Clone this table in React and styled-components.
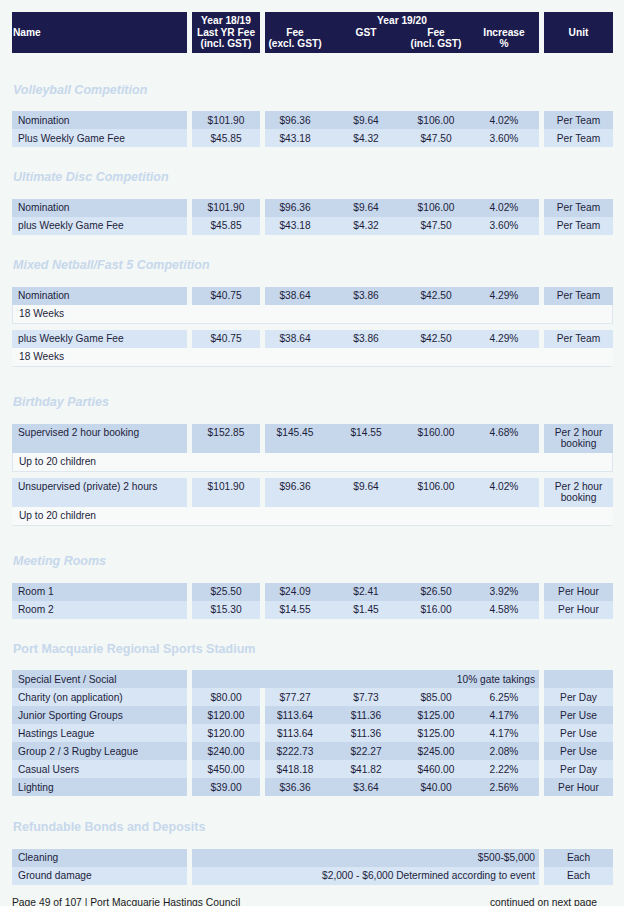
import React from "react"
import styled, { createGlobalStyle } from "styled-components"

const GlobalStyle = createGlobalStyle`
  html, body {
    margin: 0;
    padding: 0;
    overflow: hidden;
    background: #f3f7f5;
  }
  body {
    font-family: "Liberation Sans", Arial, sans-serif;
    color: #1d1d3b;
  }
`

const COLS = "175px 68px 274px 69px"
const SUB = "60px 82px 58px 74px"

const Page = styled.div`
  width: 601px;
  padding: 12px 11px 0 12px;
`

const HeaderRow = styled.div`
  display: grid;
  grid-template-columns: ${COLS};
  column-gap: 5px;
  height: 41px;
`

const HeadCell = styled.div`
  background: #1c1b4d;
  color: #ffffff;
  font-weight: bold;
  font-size: 10.2px;
  line-height: 11.5px;
  display: flex;
  flex-direction: column;
  justify-content: center;
  align-items: ${props => (props.$left ? "flex-start" : "center")};
  text-align: center;
  padding-left: ${props => (props.$left ? "1px" : "0")};
`

const HeadGroup = styled.div`
  background: #1c1b4d;
  color: #ffffff;
  font-weight: bold;
  font-size: 10.2px;
  line-height: 11.5px;
  display: grid;
  grid-template-columns: ${SUB};
  align-content: center;
  text-align: center;
`

const GroupTitle = styled.div`
  grid-column: 1 / -1;
`

const SubHead = styled.div`
  padding-left: ${props => (props.$shift ? "4px" : "0")};
`

const Section = styled.section`
  margin-top: ${props => props.$top}px;
`

const Title = styled.h2`
  margin: 0 0 11.5px;
  height: 20px;
  line-height: 20px;
  font-size: 12.5px;
  font-weight: bold;
  font-style: ${props => (props.$italic ? "italic" : "normal")};
  color: #c7d7ec;
  padding-left: 1px;
`

const Entries = styled.div`
  display: flex;
  flex-direction: column;
  gap: ${props => (props.$spaced ? "6px" : "0")};
`

const Row = styled.div`
  display: grid;
  grid-template-columns: ${COLS};
  column-gap: 5px;
  font-size: 10.2px;
  line-height: 11px;
`

const Cell = styled.div`
  background: ${props => (props.$dark ? "#c6d7ec" : "#d7e5f5")};
  padding: 3.5px ${props => (props.$merged ? "4px" : "0")} 3.5px
    ${props => (props.$name ? "6px" : "0")};
  text-align: ${props =>
    props.$name ? "left" : props.$merged ? "right" : "center"};
  grid-column: ${props => (props.$merged ? "span 2" : "auto")};
  white-space: ${props => (props.$name ? "nowrap" : "normal")};
`

const Group = styled.div`
  display: grid;
  grid-template-columns: ${SUB};
  background: ${props => (props.$dark ? "#c6d7ec" : "#d7e5f5")};
  padding: 3.5px 0;
  text-align: center;
`

const Value = styled.span`
  padding-left: ${props => (props.$shift ? "4px" : "0")};
`

const Note = styled.div`
  background: #f8faf9;
  font-size: 10.2px;
  line-height: 11px;
  padding: 3.5px 6px;
  border-bottom: 1px solid #dfe7ee;
  border-left: 1px solid ${props => (props.$boxed ? "#dfe7ee" : "transparent")};
  border-right: 1px solid ${props => (props.$boxed ? "#dfe7ee" : "transparent")};
`

const Entry = styled.div``

const Footer = styled.footer`
  display: flex;
  margin-top: 12.5px;
  font-size: 10.3px;
  line-height: 12px;
  color: #1a1a22;
`

const FooterRight = styled.span`
  margin-left: auto;
  padding-right: 16px;
`

const sections = [
  {
    title: "Volleyball Competition",
    italic: true,
    top: 26.5,
    rows: [
      { name: "Nomination", old: "$101.90", fee: "$96.36", gst: "$9.64", total: "$106.00", inc: "4.02%", unit: "Per Team" },
      { name: "Plus Weekly Game Fee", old: "$45.85", fee: "$43.18", gst: "$4.32", total: "$47.50", inc: "3.60%", unit: "Per Team" },
    ],
  },
  {
    title: "Ultimate Disc Competition",
    italic: true,
    top: 20,
    rows: [
      { name: "Nomination", old: "$101.90", fee: "$96.36", gst: "$9.64", total: "$106.00", inc: "4.02%", unit: "Per Team" },
      { name: "plus Weekly Game Fee", old: "$45.85", fee: "$43.18", gst: "$4.32", total: "$47.50", inc: "3.60%", unit: "Per Team" },
    ],
  },
  {
    title: "Mixed Netball/Fast 5 Competition",
    italic: true,
    top: 20.5,
    spaced: true,
    rows: [
      { name: "Nomination", old: "$40.75", fee: "$38.64", gst: "$3.86", total: "$42.50", inc: "4.29%", unit: "Per Team", note: "18 Weeks", boxed: true },
      { name: "plus Weekly Game Fee", old: "$40.75", fee: "$38.64", gst: "$3.86", total: "$42.50", inc: "4.29%", unit: "Per Team", note: "18 Weeks" },
    ],
  },
  {
    title: "Birthday Parties",
    italic: true,
    top: 25.5,
    spaced: true,
    rows: [
      { name: "Supervised 2 hour booking", old: "$152.85", fee: "$145.45", gst: "$14.55", total: "$160.00", inc: "4.68%", unit: "Per 2 hour booking", note: "Up to 20 children", boxed: true },
      { name: "Unsupervised (private) 2 hours", old: "$101.90", fee: "$96.36", gst: "$9.64", total: "$106.00", inc: "4.02%", unit: "Per 2 hour booking", note: "Up to 20 children" },
    ],
  },
  {
    title: "Meeting Rooms",
    italic: true,
    top: 25.5,
    rows: [
      { name: "Room 1", old: "$25.50", fee: "$24.09", gst: "$2.41", total: "$26.50", inc: "3.92%", unit: "Per Hour" },
      { name: "Room 2", old: "$15.30", fee: "$14.55", gst: "$1.45", total: "$16.00", inc: "4.58%", unit: "Per Hour" },
    ],
  },
  {
    title: "Port Macquarie Regional Sports Stadium",
    top: 20,
    rows: [
      { name: "Special Event / Social", merged: "10% gate takings", unit: "" },
      { name: "Charity (on application)", old: "$80.00", fee: "$77.27", gst: "$7.73", total: "$85.00", inc: "6.25%", unit: "Per Day" },
      { name: "Junior Sporting Groups", old: "$120.00", fee: "$113.64", gst: "$11.36", total: "$125.00", inc: "4.17%", unit: "Per Use" },
      { name: "Hastings League", old: "$120.00", fee: "$113.64", gst: "$11.36", total: "$125.00", inc: "4.17%", unit: "Per Use" },
      { name: "Group 2 / 3 Rugby League", old: "$240.00", fee: "$222.73", gst: "$22.27", total: "$245.00", inc: "2.08%", unit: "Per Use" },
      { name: "Casual Users", old: "$450.00", fee: "$418.18", gst: "$41.82", total: "$460.00", inc: "2.22%", unit: "Per Day" },
      { name: "Lighting", old: "$39.00", fee: "$36.36", gst: "$3.64", total: "$40.00", inc: "2.56%", unit: "Per Hour" },
    ],
  },
  {
    title: "Refundable Bonds and Deposits",
    top: 21,
    rows: [
      { name: "Cleaning", merged: "$500-$5,000", unit: "Each" },
      { name: "Ground damage", merged: "$2,000 - $6,000 Determined according to event", unit: "Each" },
    ],
  },
]

const FeeRow = ({ row, dark }) => (
  <Row>
    <Cell $name $dark={dark}>{row.name}</Cell>
    {row.merged !== undefined ? (
      <Cell $merged $dark={dark}>{row.merged}</Cell>
    ) : (
      <>
        <Cell $dark={dark}>{row.old}</Cell>
        <Group $dark={dark}>
          <Value>{row.fee}</Value>
          <Value>{row.gst}</Value>
          <Value>{row.total}</Value>
          <Value $shift>{row.inc}</Value>
        </Group>
      </>
    )}
    <Cell $dark={dark}>{row.unit}</Cell>
  </Row>
)

const App = () => (
  <>
    <GlobalStyle />
    <Page>
      <HeaderRow>
        <HeadCell $left>Name</HeadCell>
        <HeadCell>
          <span>Year 18/19</span>
          <span>Last YR Fee</span>
          <span>(incl. GST)</span>
        </HeadCell>
        <HeadGroup>
          <GroupTitle>Year 19/20</GroupTitle>
          <SubHead>Fee<br />(excl. GST)</SubHead>
          <SubHead>GST</SubHead>
          <SubHead>Fee<br />(incl. GST)</SubHead>
          <SubHead $shift>Increase<br />%</SubHead>
        </HeadGroup>
        <HeadCell>Unit</HeadCell>
      </HeaderRow>

      {sections.map(section => (
        <Section key={section.title} $top={section.top}>
          <Title $italic={section.italic}>{section.title}</Title>
          <Entries $spaced={section.spaced}>
            {section.rows.map((row, i) => (
              <Entry key={row.name + i}>
                <FeeRow row={row} dark={i % 2 === 0} />
                {row.note && <Note $boxed={row.boxed}>{row.note}</Note>}
              </Entry>
            ))}
          </Entries>
        </Section>
      ))}

      <Footer>
        <span>Page 49 of 107 | Port Macquarie Hastings Council</span>
        <FooterRight>continued on next page</FooterRight>
      </Footer>
    </Page>
  </>
)

export default App
